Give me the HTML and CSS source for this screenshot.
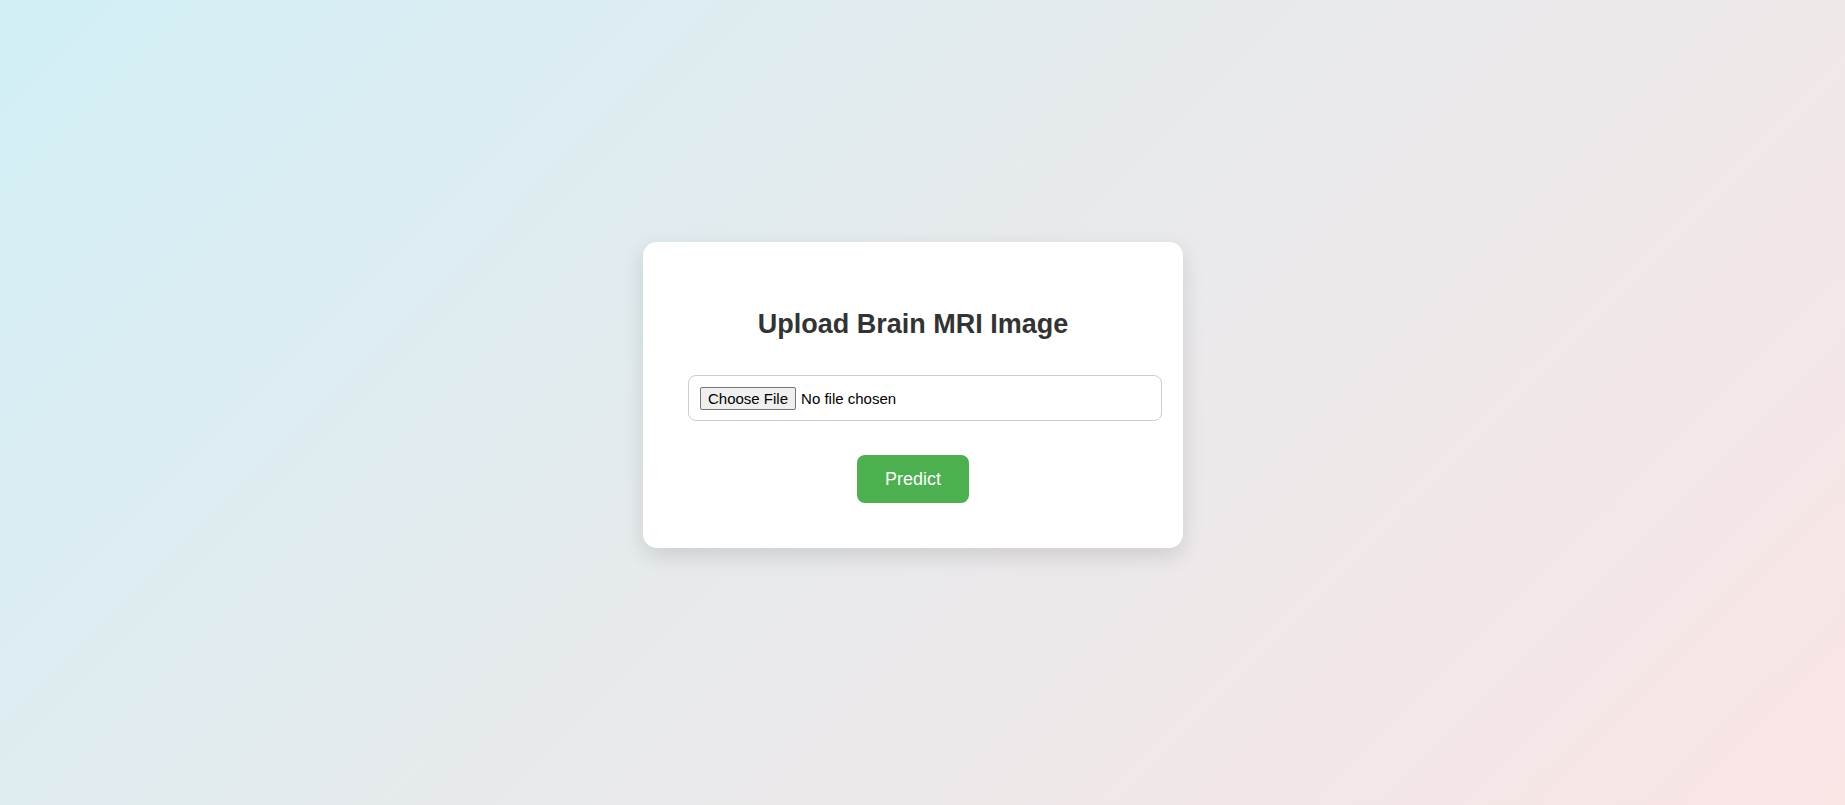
FILE: index.html
```html
<!DOCTYPE html>
<html lang="en">
<head>
<meta charset="UTF-8">
<title>Brain MRI Upload</title>
<link rel="stylesheet" href="styles.css">
</head>
<body>
  <main class="card">
    <h2 class="card-title">Upload Brain MRI Image</h2>
    <form class="upload-form" onsubmit="return false;">
      <input class="file-input" type="file" name="file" accept="image/*">
      <button class="predict-btn" type="submit">Predict</button>
    </form>
  </main>
</body>
</html>
```

FILE: styles.css
```css
* {
  box-sizing: border-box;
}

html, body {
  height: 100%;
}

body {
  margin: 0;
  min-height: 100vh;
  display: flex;
  align-items: center;
  justify-content: center;
  padding: 0 19px 16px 0;
  font-family: "Liberation Sans", Arial, sans-serif;
  background: linear-gradient(135deg, #d1eff6 0%, #e8eaec 50%, #fae5e5 100%);
}

.card {
  width: 540px;
  background: #ffffff;
  border-radius: 14px;
  padding: 45px 45px 45px;
  box-shadow: 0 8px 22px rgba(0, 0, 0, 0.12);
}

.card-title {
  margin: 22px 0 35px;
  font-size: 27px;
  line-height: 31px;
  font-weight: bold;
  color: #333333;
  text-align: center;
}

.upload-form {
  display: flex;
  flex-direction: column;
  align-items: flex-start;
}

.file-input {
  box-sizing: content-box;
  display: block;
  width: 100%;
  height: 23px;
  padding: 11px 11px 10px;
  border: 1px solid #cccccc;
  border-radius: 8px;
  font-family: "Liberation Sans", Arial, sans-serif;
  font-size: 15px;
  color: #000000;
  background: #ffffff;
}

.file-input::file-selector-button {
  height: 23px;
  margin: 0 5px 0 0;
  padding: 0 7px;
  border: 1px solid #767676;
  border-radius: 2px;
  background: #efefef;
  color: #000000;
  font-family: "Liberation Sans", Arial, sans-serif;
  font-size: 15px;
}

.predict-btn {
  align-self: center;
  margin-top: 34px;
  padding: 13px 28px;
  border: none;
  border-radius: 8px;
  background: #4caf50;
  color: #ffffff;
  font-family: "Liberation Sans", Arial, sans-serif;
  font-size: 18px;
  line-height: 22px;
  cursor: pointer;
}
```
